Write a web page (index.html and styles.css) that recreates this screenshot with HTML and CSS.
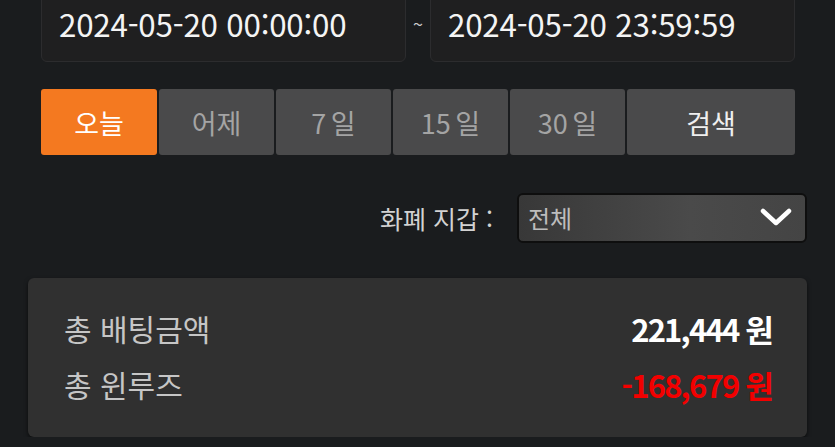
FILE: index.html
```html
<!DOCTYPE html>
<html lang="ko">
<head>
<meta charset="utf-8">
<link rel="stylesheet" href="styles.css">
</head>
<body>
<div class="page">
  <div class="top">
    <div class="dates">
      <div class="date-input">2024-05-20 00:00:00</div>
      <div class="tilde">~</div>
      <div class="date-input">2024-05-20 23:59:59</div>
    </div>
    <div class="btns">
      <div class="btn active">오늘</div>
      <div class="btn">어제</div>
      <div class="btn">7 일</div>
      <div class="btn">15 일</div>
      <div class="btn">30 일</div>
      <div class="btn search">검색</div>
    </div>
  </div>
  <div class="currency">
    <span class="cur-label">화폐 지갑 :</span>
    <div class="select">
      <span>전체</span>
      <svg class="chev" width="34" height="22" viewBox="0 0 34 22"><path d="M4 5 L17 17 L30 5" fill="none" stroke="#fff" stroke-width="4.5" stroke-linecap="round" stroke-linejoin="round"/></svg>
    </div>
  </div>
  <div class="card">
    <div class="row"><span class="lbl">총 배팅금액</span><span class="val">221,444 원</span></div>
    <div class="row"><span class="lbl">총 윈루즈</span><span class="val neg">-168,679 원</span></div>
  </div>
</div>
</body>
</html>
```
FILE: styles.css
```css
html, body {
  margin: 0;
  padding: 0;
  background: #1a1c1e;
  font-family: "Noto Sans CJK KR", "Noto Sans", sans-serif;
  overflow: hidden;
}
.page {
  padding: 0 28px;
}
.top {
  padding: 0 12px 0 13px;
}
.dates {
  display: flex;
  align-items: stretch;
  margin-top: -14px;
}
.date-input {
  flex: 1;
  height: 76px;
  box-sizing: border-box;
  background: #1f1f20;
  border: 1px solid #2c2c2e;
  border-radius: 6px;
  color: #f4f4f4;
  font-size: 31.3px;
  letter-spacing: -0.2px;
  display: flex;
  align-items: center;
  padding: 0 0 2px 17px;
}
.tilde {
  width: 24px;
  color: #ccc;
  font-size: 18px;
  display: flex;
  justify-content: center;
  align-items: center;
  padding-bottom: 2px;
}
.btns {
  display: flex;
  gap: 2px;
  margin-top: 27px;
}
.btn {
  width: 115px;
  height: 66px;
  background: #4a4a4b;
  border-radius: 3px;
  color: #a4a4a4;
  font-size: 27px;
  word-spacing: -3px;
  display: flex;
  align-items: center;
  justify-content: center;
}
.btn.active {
  background: #f47920;
  color: #fff;
  width: 116px;
}
.btn.search {
  flex: 1;
  color: #efefef;
}
.currency {
  display: flex;
  justify-content: flex-end;
  align-items: center;
  margin-top: 38px;
}
.cur-label {
  color: #d2d2d2;
  font-size: 25px;
  margin-right: 24px;
}
.select {
  width: 290px;
  height: 50px;
  box-sizing: border-box;
  border: 2px solid #0e0e0e;
  border-radius: 6px;
  background: linear-gradient(90deg, #383838, #4a4a4a 60%, #444);
  display: flex;
  align-items: center;
  justify-content: space-between;
  padding: 0 12px 2px 9px;
  color: #bdbdbd;
  font-size: 24px;
}
.chev {
  display: block;
}
.card {
  margin-top: 35px;
  background: #303030;
  border-radius: 6px;
  box-shadow: 0 2px 4px rgba(0,0,0,0.6);
  padding: 22px 35px 25px 36px;
}
.row {
  height: 56px;
  display: flex;
  justify-content: space-between;
  align-items: center;
}
.lbl {
  color: #c6c6c6;
  font-size: 30px;
}
.val {
  color: #fff;
  font-size: 31px;
  font-weight: bold;
  letter-spacing: -1.8px;
}
.val.neg {
  color: #f20000;
}
```
